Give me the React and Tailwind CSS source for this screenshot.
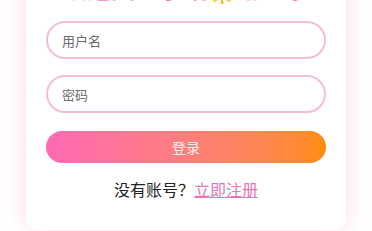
import React from 'react';

const font = { fontFamily: '"Noto Sans CJK SC", "Noto Sans", sans-serif' };

export default function App() {
    return (
        <div className="w-[372px] h-[231px] overflow-hidden bg-white" style={font}>
            <div className="flex justify-center mt-[-49px]">
                <div className="w-[320px] bg-white rounded-xl shadow-[0_0_22px_rgba(255,170,210,0.45)] px-5 pt-[21px] pb-[29px]">
                    {/* Title */}
                    <h2 className="text-center text-2xl leading-8 font-bold mb-[17px] bg-gradient-to-r from-[#e86ac0] to-[#ff8fa0] bg-clip-text text-transparent">
                        欢迎回到小站<span className="text-[#f5b400]">🌟</span>请登录
                    </h2>

                    {/* Form */}
                    <div className="flex flex-col gap-4">
                        <input
                            placeholder="用户名"
                            className="h-[38px] w-full rounded-full border-2 border-[#f8bfcb] px-[14px] text-[13px] text-gray-700 placeholder:text-[#6b6b6b] outline-none"
                        />
                        <input
                            type="password"
                            placeholder="密码"
                            className="h-[38px] w-full rounded-full border-2 border-[#f8bfcb] px-[14px] text-[13px] text-gray-700 placeholder:text-[#6b6b6b] outline-none"
                        />
                        <button className="mt-[2px] h-8 w-full rounded-full bg-gradient-to-r from-[#ff69b4] to-[#ff8c00] text-[14px] text-white/90">
                            登录
                        </button>
                    </div>

                    <p className="mt-[14px] text-center text-base leading-6 text-[#222]">
                        没有账号？<a href="#" className="text-[#e874b8] underline">立即注册</a>
                    </p>
                </div>
            </div>
        </div>
    );
}
